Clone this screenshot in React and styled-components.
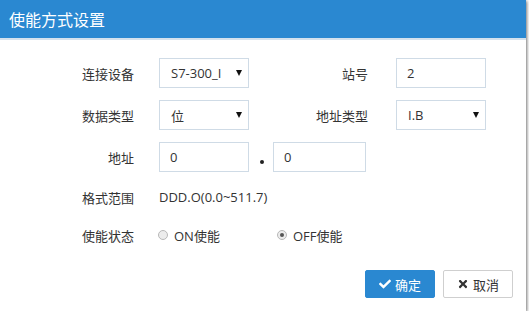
import React from "react"
import styled, { createGlobalStyle } from "styled-components"
import { FaCheck, FaTimes } from "react-icons/fa"

const Global = createGlobalStyle`
  body {
    margin: 0;
    background: #ffffff;
    font-family: "Noto Sans CJK SC", "Open Sans", sans-serif;
  }
`

const Dialog = styled.div`
  width: 526px;
  height: 311px;
  background: #fff;
  box-shadow: 1px 1px 3px rgba(0, 0, 0, 0.55);
  display: flex;
  flex-direction: column;
  box-sizing: border-box;
`

const Header = styled.div`
  height: 38px;
  background: #2a88d1;
  border-bottom: 2px solid #d4e2ee;
  color: #fff;
  font-size: 16px;
  display: flex;
  align-items: center;
  padding-left: 9px;
`

const Body = styled.div`
  padding-top: 18px;
  display: flex;
  flex-direction: column;
  gap: 12px;
`

const Row = styled.div`
  display: flex;
  align-items: center;
  height: ${p => p.$h || 30}px;
`

const Label = styled.div`
  width: ${p => p.$w}px;
  margin-right: ${p => p.$mr}px;
  text-align: right;
  font-size: 13px;
  color: #333;
  flex-shrink: 0;
`

const Field = styled.div`
  width: ${p => p.$w || 90}px;
  height: 30px;
  box-sizing: border-box;
  border: 1px solid #cfdbe6;
  display: flex;
  align-items: center;
  padding-left: ${p => p.$pl || 10}px;
  padding-right: 6px;
  font-family: "Open Sans", "Noto Sans CJK SC", sans-serif;
  font-size: 13px;
  color: #333;
  overflow: hidden;
`

const Value = styled.span`
  flex: 1;
  white-space: nowrap;
  overflow: hidden;
`

const Arrow = styled.span`
  width: 0;
  height: 0;
  border-left: 3px solid transparent;
  border-right: 3px solid transparent;
  border-top: 6px solid #111;
  margin-left: 4px;
`

const Dot = styled.span`
  width: 4px;
  height: 4px;
  border-radius: 50%;
  background: #222;
  margin: 10px 9px 0 11px;
  align-self: center;
`

const Text = styled.span`
  font-family: "Open Sans", "Noto Sans CJK SC", sans-serif;
  font-size: 13px;
  color: #333;
`

const Radio = styled.label`
  display: flex;
  align-items: center;
  gap: 6px;
  width: ${p => p.$w}px;
  font-size: 13px;
  color: #333;
  font-family: "Open Sans", "Noto Sans CJK SC", sans-serif;
`

const Circle = styled.span`
  width: 10px;
  height: 10px;
  border-radius: 50%;
  border: 1px solid #b8b8b8;
  background: #ececec;
  box-sizing: border-box;
  display: flex;
  align-items: center;
  justify-content: center;
  &::after {
    content: "";
    width: 4px;
    height: 4px;
    border-radius: 50%;
    background: ${p => (p.$on ? "#555" : "transparent")};
  }
`

const Footer = styled.div`
  display: flex;
  justify-content: flex-end;
  gap: 8px;
  padding: 22px 13px 0 0;
`

const Button = styled.button`
  width: 70px;
  height: 28px;
  box-sizing: border-box;
  border: 1px solid ${p => (p.$primary ? "#2a88d1" : "#cfcfcf")};
  background: ${p => (p.$primary ? "#2a88d1" : "#fff")};
  color: ${p => (p.$primary ? "#fff" : "#333")};
  border-radius: 2px;
  font-family: "Noto Sans CJK SC", sans-serif;
  font-size: 13px;
  display: flex;
  align-items: center;
  justify-content: center;
  gap: 4px;
  padding: 0;
  svg {
    font-size: 12px;
  }
`

export default function App() {
  return (
    <>
      <Global />
      <Dialog>
        <Header>使能方式设置</Header>
        <Body>
          <Row>
            <Label $w={134} $mr={25}>连接设备</Label>
            <Field $pl={11}>
              <Value>S7-300_I</Value>
              <Arrow />
            </Field>
            <Label $w={119} $mr={28}>站号</Label>
            <Field>
              <Value>2</Value>
            </Field>
          </Row>
          <Row>
            <Label $w={134} $mr={25}>数据类型</Label>
            <Field $pl={11}>
              <Value>位</Value>
              <Arrow />
            </Field>
            <Label $w={119} $mr={28}>地址类型</Label>
            <Field $pl={11}>
              <Value>I.B</Value>
              <Arrow />
            </Field>
          </Row>
          <Row>
            <Label $w={134} $mr={25}>地址</Label>
            <Field>
              <Value>0</Value>
            </Field>
            <Dot />
            <Field $w={93}>
              <Value>0</Value>
            </Field>
          </Row>
          <Row $h={26}>
            <Label $w={134} $mr={25}>格式范围</Label>
            <Text>DDD.O(0.0~511.7)</Text>
          </Row>
          <Row $h={26}>
            <Label $w={134} $mr={24}>使能状态</Label>
            <Radio $w={119}>
              <Circle />
              ON使能
            </Radio>
            <Radio>
              <Circle $on />
              OFF使能
            </Radio>
          </Row>
        </Body>
        <Footer>
          <Button $primary>
            <FaCheck />
            确定
          </Button>
          <Button>
            <FaTimes />
            取消
          </Button>
        </Footer>
      </Dialog>
    </>
  )
}
